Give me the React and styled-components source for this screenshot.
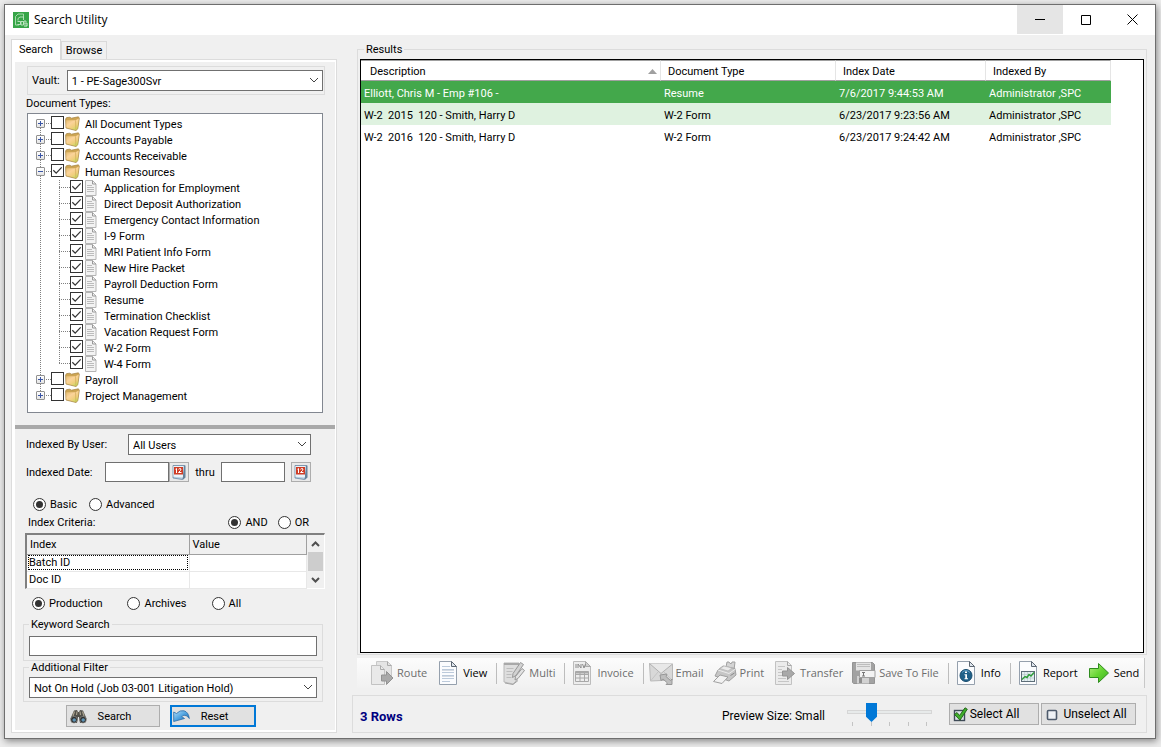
import { useState } from "react";
import styled, { createGlobalStyle, css } from "styled-components";

const ui = `Roboto, "Liberation Sans", Arial, sans-serif`;
const segoe = `"Open Sans", "Noto Sans", sans-serif`;

const GlobalStyle = createGlobalStyle`
  *, *::before, *::after {
    box-sizing: border-box;
  }
  body {
    margin: 0;
    background: #ececec;
    font-family: ${ui};
    font-size: 11px;
    line-height: 15px;
    color: #000;
  }
  button, input, select, table {
    font: inherit;
    color: inherit;
  }
  svg {
    flex: none;
  }
`;

/* window */

const Desktop = styled.div`
  display: flex;
  min-height: 100vh;
  padding: 4px 5px 8px 4px;
`;

const Window = styled.div`
  flex: 1;
  min-width: 0;
  display: flex;
  flex-direction: column;
  border: 1px solid #6e6e6e;
  background: #f0f0f0;
  box-shadow: 1px 2px 7px rgba(0, 0, 0, 0.45);
`;

const TitleBar = styled.header`
  display: flex;
  align-items: flex-start;
  height: 30px;
  padding-left: 8px;
  background: #fff;
`;

const AppTitle = styled.h1`
  flex: 1;
  display: flex;
  align-items: center;
  gap: 5px;
  height: 30px;
  margin: 0;
  font: 12px / 16px ${segoe};
`;

const WindowButton = styled.button`
  display: grid;
  place-items: center;
  width: 46px;
  height: 29px;
  padding: 0;
  border: 0;
  background: ${(props) => (props.$hot ? "#e5e5e5" : "transparent")};
`;

const Content = styled.main`
  flex: 1;
  display: flex;
  gap: 15px;
  padding: 4px 8px 5px 6px;
`;

/* left side */

const Sidebar = styled.section`
  flex: none;
  width: 326px;
  display: flex;
  flex-direction: column;
`;

const Tabs = styled.div`
  display: flex;
  align-items: flex-end;
  height: 20px;
`;

const Tab = styled.button`
  height: ${(props) => (props.$active ? 21 : 18)}px;
  padding: 0 4px;
  border: 1px solid #d9d9d9;
  border-bottom: 0;
  background: #f0f0f0;
  ${(props) =>
    props.$active &&
    css`
      z-index: 1;
      margin-bottom: -1px;
      padding: 0 7px 2px;
      background: #fff;
    `}
`;

const TabPanel = styled.div`
  flex: 1;
  display: flex;
  border: 1px solid #dcdcdc;
  padding: 2px 1px 2px 3px;
  background: #fff;
`;

const Form = styled.form`
  flex: 1;
  display: flex;
  flex-direction: column;
  background: #f0f0f0;
`;

const VaultBox = styled.div`
  display: flex;
  align-items: center;
  gap: 7px;
  margin: 4px 10px 0 12px;
  padding: 3px 1px 3px 4px;
  border: 1px solid #dcdcdc;
`;

const SelectBox = styled.span`
  position: relative;
  display: flex;
  flex: 1;
  & svg {
    position: absolute;
    right: 4px;
    top: 7px;
    pointer-events: none;
  }
`;

const SelectControl = styled.select`
  flex: 1;
  height: 21px;
  padding: 1px 20px 0 4px;
  border: 1px solid #707070;
  border-radius: 0;
  background: #fff;
  appearance: none;
`;

const TreeTitle = styled.div`
  margin: 1px 11px 2px;
`;

const Tree = styled.ul`
  flex: 1;
  margin: 0 12px 12px;
  padding: 2px 0;
  border: 1px solid #828790;
  background: #fff;
  list-style: none;
`;

const TreeRow = styled.li`
  display: flex;
  height: 16px;
`;

const dotsDown = "repeating-linear-gradient(#808080 0 1px, transparent 1px 2px)";
const dotsAcross =
  "repeating-linear-gradient(90deg, #808080 0 1px, transparent 1px 2px)";

const Gutter = styled.span`
  flex: none;
  display: flex;
  align-items: center;
  width: ${(props) => props.$width}px;
  padding: 0 0 1px 8px;
  background-image: ${dotsDown}, ${dotsAcross};
  background-repeat: no-repeat;
  background-position:
    ${(props) => props.$line}px ${(props) => (props.$first ? 8 : 0)}px,
    ${(props) => props.$line}px 7px;
  background-size:
    1px ${(props) => (props.$first || props.$last ? 8 : 16)}px,
    ${(props) => (props.$branch ? 20 : 0)}px 1px;
`;

const Expander = styled.button`
  display: grid;
  place-items: center;
  width: 9px;
  height: 9px;
  padding: 0;
  border: 1px solid #919191;
  border-radius: 1px;
  background: linear-gradient(#fff, #e4e4e4);
`;

const TreeLabel = styled.label`
  display: flex;
  align-items: center;
  height: 16px;
  padding-top: 1px;
  white-space: nowrap;
  & svg {
    margin: 0 ${(props) => (props.$leaf ? "7px 1px 1px" : "5px 3px 1px")};
  }
`;

const Tick = styled.input`
  flex: none;
  width: 13px;
  height: 13px;
  margin: 0 0 4px;
  border: 1px solid #333;
  background: #fff;
  appearance: none;
  &:checked::before {
    content: "";
    display: block;
    width: 11px;
    height: 11px;
    background: #333;
    clip-path: polygon(8% 52%, 16% 44%, 38% 66%, 84% 18%, 92% 26%, 38% 82%);
  }
`;

const Splitter = styled.div`
  height: 4px;
  margin-bottom: 5px;
  background: #a9a9a9;
`;

const FieldRow = styled.div`
  display: flex;
  align-items: center;
  padding: 0 24px 0 11px;
  margin-bottom: 7px;
`;

const FieldLabel = styled.label`
  flex: none;
  width: ${(props) => props.$width}px;
`;

const TextBox = styled.input`
  height: 20px;
  width: ${(props) => (props.$wide ? "100%" : "64px")};
  padding: 0 4px;
  border: 1px solid #707070;
  background: #fff;
`;

const DateButton = styled.button`
  display: grid;
  place-items: center;
  width: 20px;
  height: 20px;
  padding: 0;
  border: 1px solid #adadad;
  background: #e9e9e9;
  margin-left: ${(props) => (props.$apart ? 6 : 0)}px;
`;

const Thru = styled.span`
  width: 32px;
  text-align: center;
`;

const RadioRow = styled.div`
  display: flex;
  align-items: center;
  gap: ${(props) => props.$gap}px;
  padding: ${(props) => props.$pad};
`;

const RadioLabel = styled.label`
  display: flex;
  align-items: center;
  gap: 4px;
  height: 15px;
`;

const Radio = styled.input`
  display: grid;
  place-items: center;
  width: 13px;
  height: 13px;
  margin: 0;
  border: 1px solid #333;
  border-radius: 50%;
  background: #fff;
  appearance: none;
  &:checked::before {
    content: "";
    width: 7px;
    height: 7px;
    border-radius: 50%;
    background: #333;
  }
`;

const Spring = styled.span`
  flex: 1;
`;

const CriteriaBox = styled.div`
  display: flex;
  height: 56px;
  margin: 3px 10px 7px;
  border: 1px solid #fff;
  border-top: 2px solid #808080;
  border-left: 2px solid #808080;
  background: #fff;
`;

const CriteriaTable = styled.table`
  flex: 1;
  height: 52px;
  border-collapse: collapse;
  table-layout: fixed;
  & th,
  & td {
    height: 17px;
    padding: 0 2px;
    border-right: 1px solid #e8e8e8;
    border-bottom: 1px solid #e8e8e8;
    font-weight: normal;
    line-height: 15px;
    text-align: left;
  }
  & th {
    height: 19px;
    padding: 0 3px;
    border-color: #a0a0a0;
    background: #f0f0f0;
  }
`;

const FocusCell = styled.td`
  outline: 1px dotted #000;
  outline-offset: -2px;
`;

const ScrollBar = styled.div`
  display: flex;
  flex-direction: column;
  width: 17px;
  background: #f0f0f0;
`;

const ScrollButton = styled.button`
  display: grid;
  place-items: center;
  height: 17px;
  padding: 0;
  border: 0;
  background: #f0f0f0;
`;

const ScrollThumb = styled.div`
  flex: 1;
  margin: 0 1px;
  background: #cdcdcd;
`;

const Group = styled.fieldset`
  margin: 0 12px 0 8px;
  padding: 5px 5px 4px;
  border: 1px solid #dcdcdc;
  min-width: 0;
  & + & {
    padding: 3px 5px;
  }
`;

const Legend = styled.legend`
  padding: 0 2px;
  line-height: 13px;
`;

const FormButtons = styled.div`
  display: flex;
  gap: 10px;
  padding: 3px 0 3px 51px;
`;

const PushButton = styled.button`
  display: flex;
  align-items: center;
  width: ${(props) => props.$width}px;
  height: 22px;
  padding: 0 3px;
  border: 1px solid #adadad;
  background: #e1e1e1;
  ${(props) =>
    props.$focused &&
    css`
      border: 2px solid #0078d7;
      padding: 0 1px;
    `}
  & span {
    flex: 1;
    padding-right: ${(props) => (props.$wideText ? 2 : 14)}px;
    text-align: center;
    white-space: nowrap;
  }
`;

/* right side */

const Main = styled.section`
  flex: 1;
  min-width: 0;
  display: flex;
  flex-direction: column;
`;

const Results = styled.section`
  flex: 1;
  display: flex;
  flex-direction: column;
  margin: 4px 0 0 5px;
`;

const ResultsFrame = styled.fieldset`
  flex: 1;
  display: flex;
  min-width: 0;
  margin: 0;
  padding: 3px 2px 1px;
  border: 1px solid #dcdcdc;
  & > legend {
    margin-left: 4px;
  }
`;

const ListView = styled.div`
  flex: 1;
  min-width: 0;
  height: 100%;
  border: 1px solid #000;
  background: #fff;
`;

const ResultTable = styled.table`
  width: 750px;
  border-collapse: separate;
  border-spacing: 0;
  table-layout: fixed;
`;

const HeadCell = styled.th`
  height: 21px;
  padding: 1px 3px 0 9px;
  border-top: 1px solid #a0a0a0;
  border-bottom: 1px solid #a0a0a0;
  border-right: 1px solid #e5e5e5;
  font-weight: normal;
  text-align: left;
  &:not(:first-child) {
    padding-left: 7px;
  }
  & span {
    display: flex;
    align-items: center;
    justify-content: space-between;
  }
`;

const Row = styled.tr`
  height: 22px;
  color: ${(props) => (props.$selected ? "#fff" : "#000")};
  background: ${(props) =>
    props.$selected ? "#43a84b" : props.$alt ? "#dff2e0" : "#fff"};
  & td {
    padding: 3px 3px 0;
    white-space: pre;
  }
`;

const Toolbar = styled.div`
  display: flex;
  align-items: center;
  height: 30px;
  margin: 3px 2px 7px 5px;
  padding-left: 9px;
  border-right: 1px solid #c8c8c8;
  background: linear-gradient(#fcfcfc, #f1f1f1);
`;

const Tool = styled.button`
  display: flex;
  align-items: center;
  gap: 3px;
  height: 28px;
  padding: 0 5px 0 4px;
  border: 0;
  background: transparent;
  font: 11px / 16px ${segoe};
  white-space: nowrap;
  color: #000;
  &:disabled {
    color: #6d6d6d;
  }
`;

const ToolDivider = styled.span`
  flex: none;
  width: 1px;
  height: 21px;
  margin: 0 1px 0 4px;
  background: #bdbdbd;
`;

const StatusBar = styled.footer`
  display: flex;
  align-items: center;
  height: 38px;
  padding: 0 10px 0 7px;
  border: 1px solid #dcdcdc;
  font-size: 12px;
`;

const RowCount = styled.strong`
  flex: 1;
  padding-top: 5px;
  font-size: 13px;
  color: #000080;
`;

const PreviewLabel = styled.label`
  padding-top: 4px;
`;

const SliderBox = styled.div`
  display: flex;
  flex-direction: column;
  width: 85px;
  margin: 0 17px 0 22px;
`;

const Slider = styled.input`
  width: 100%;
  height: 19px;
  margin: 0;
  background: transparent;
  appearance: none;
  &::-webkit-slider-runnable-track {
    height: 4px;
    border: 1px solid #d6d6d6;
    background: #e7eaea;
  }
  &::-webkit-slider-thumb {
    width: 11px;
    height: 19px;
    margin-top: -8px;
    background: #0078d7;
    clip-path: polygon(0 0, 100% 0, 100% 73%, 50% 100%, 0 73%);
    appearance: none;
  }
`;

const Ticks = styled.div`
  display: flex;
  justify-content: space-between;
  padding: 0 5px;
  & i {
    width: 1px;
    height: 4px;
    background: #c4c4c4;
  }
`;

const StatusButtons = styled.div`
  display: flex;
  gap: 2px;
`;

/* icons */

const Chevron = () => (
  <svg width="10" height="7" viewBox="0 0 10 7" fill="none" stroke="#444">
    <path d="M1 1l4 4 4-4" />
  </svg>
);

const ScrollArrow = ({ down }) => (
  <svg width="9" height="6" viewBox="0 0 9 6" fill="none" stroke="#505050" strokeWidth="2">
    <path d={down ? "M1 1l3.5 3.5L8 1" : "M1 5l3.5-3.5L8 5"} />
  </svg>
);

const AppIcon = () => (
  <svg width="16" height="16" viewBox="0 0 16 16" fill="none">
    <rect width="16" height="16" fill="#37a548" />
    <path d="M2.500 13V4.500L5 2h5.500v3M2.500 13H6" stroke="#a5dba9" />
    <path d="M5 8.500V6.500L7 5h3.500v3M4.500 9.500h3v3h-3M8 9.500h2.500v3.500H8zM11 9h2v3h-2z" stroke="#d4efd6" strokeWidth=".8" />
    <path d="M11 14h3v-3" stroke="#d4efd6" />
  </svg>
);

const Folder = () => (
  <svg width="15" height="15" viewBox="0 0 15 15">
    <defs>
      <linearGradient id="folder" x1="0" y1="0" x2="0.7" y2="1">
        <stop offset="0" stopColor="#dfb765" />
        <stop offset="0.45" stopColor="#fbd39a" />
        <stop offset="0.75" stopColor="#f0cf7c" />
        <stop offset="1" stopColor="#c6dc62" />
      </linearGradient>
    </defs>
    <path d="M.6 3l1-1.400L5 1.200l1.200 1L13.400 .8l.9 1.400-1.500 10.600-1.800 1.700L1 12z" fill="#cda553" stroke="#a38140" strokeWidth=".7" />
    <path d="M1.200 4.200l9.300.1 3.300-1.900-1.400 10.300-1.600 1.300L1.300 11.600z" fill="url(#folder)" />
    <path d="M10.500 4.300l.4 9.500" stroke="#c9a253" strokeWidth=".6" />
  </svg>
);

const Sheet = () => (
  <svg width="13" height="16" viewBox="0 0 13 16" fill="none">
    <path d="M1.500 .5h7l3.500 3.500v11.500H1.500z" fill="#f3f3f3" stroke="#b4b4b4" />
    <path d="M8.500 .5V4H12" stroke="#999" />
    <path d="M3 5.500h5M3 7.500h7M3 9.500h7M3 11.500h7" stroke="#bcbcbc" />
  </svg>
);

const Calendar = () => (
  <svg width="14" height="16" viewBox="0 0 14 16">
    <path d="M1 1.500h11.500v12l-2 2L1 14z" fill="#b4cde0" stroke="#6c87a0" strokeWidth=".8" />
    <path d="M10.500 14.500l1.500-13h1.500v12l-2.500 2.200z" fill="#66829b" />
    <path d="M1.500 2h10l-.6 11.500-9.400-.8z" fill="#eaf3f9" />
    <rect x="2" y="3" width="9" height="7.500" fill="#cf3d26" />
    <path d="M4.500 4.500v4.500M3.500 5.200l1-.7M6.500 5.300q1.500-1.500 2.500-.3.300 1.200-2.500 3.500h3" fill="none" stroke="#fff" />
  </svg>
);

const Binoculars = () => (
  <svg width="17" height="15" viewBox="0 0 17 15">
    <path d="M4 1.500l3-.5 1 2h1l1-2 3 .5 3.500 8L14 14H10l-1-6H8l-1 6H3L.5 9.500z" fill="#514f49" />
    <path d="M4.500 2.500L3 7M7 2.500L6.500 6M12.500 2.500L14 7M10 2.500l.5 3.500" stroke="#a8a08c" strokeWidth="1.200" />
    <circle cx="4" cy="10.700" r="3.300" fill="#2d2d2d" stroke="#8c8c88" strokeWidth=".7" />
    <circle cx="13" cy="10.700" r="3.300" fill="#2d2d2d" stroke="#8c8c88" strokeWidth=".7" />
    <circle cx="4.200" cy="11" r="1.800" fill="#5e93b4" />
    <circle cx="13.200" cy="11" r="1.800" fill="#5e93b4" />
  </svg>
);

const ResetIcon = () => (
  <svg width="17" height="14" viewBox="0 0 17 14">
    <defs>
      <linearGradient id="reset" x1="0" y1="0" x2="1" y2="1">
        <stop offset="0" stopColor="#b9e1fa" />
        <stop offset="0.5" stopColor="#4fa3e0" />
        <stop offset="1" stopColor="#1d64a8" />
      </linearGradient>
    </defs>
    <path d="M.7 3l2.800 1.500Q7 .8 11 1.800q4.500 1.200 5.300 7.700-2.300-3.500-5.300-3.300-1.500.3-2.200 1.500L11.500 9.500.7 12.500z" fill="url(#reset)" stroke="#2a6ca8" strokeWidth=".8" />
  </svg>
);

const ToolSvg = ({ children }) => (
  <svg width="24" height="24" viewBox="0 0 24 24" fill="none">
    {children}
  </svg>
);

const Paper = ({ faded }) => (
  <>
    <path d="M3.500 .5h12l5 5v18h-17z" fill={faded ? "#ededed" : "#fbfcfe"} stroke={faded ? "#bcbcbc" : "#95a0ad"} />
    <path d="M15.500 .5v5h5z" fill={faded ? "#d0d0d0" : "#dfe6ee"} stroke={faded ? "#aaa" : "#5d6772"} />
  </>
);

const RouteIcon = () => (
  <ToolSvg>
    <path d="M6.500 .5h11l4 4v14h-15z" fill="#e4e4e4" stroke="#c8c8c8" />
    <path d="M1.500 4.500h9l4 4v15h-13z" fill="#e9e9e9" stroke="#c2c2c2" />
    <path d="M10.500 4.500v4h4M17.500 .5v4h4" stroke="#aaa" />
    <path d="M11.500 14h5v-3.500l6.500 6.500-6.500 6.500V20h-5z" fill="#a9a9a9" stroke="#929292" />
  </ToolSvg>
);

const ViewIcon = () => (
  <ToolSvg>
    <Paper />
    <path d="M6 5.500h8M6 8.500h12M6 11.500h12M6 14.500h12M6 17.500h12M6 20.500h8" stroke="#bccadb" />
    <path d="M6 9.500h12M6 15.500h12" stroke="#d5dbe3" />
  </ToolSvg>
);

const MultiIcon = () => (
  <ToolSvg>
    <path d="M2 2h15l-2 17-4 4-9-2z" fill="#dedede" stroke="#b8b8b8" />
    <path d="M2 2h15v2H2z" fill="#a9a9a9" />
    <path d="M4.500 7.500h7M4.500 10.500h6M4.500 13.500h5M4.500 16.500h5" stroke="#bdbdbd" />
    <path d="M18.500 1.500l3 2-7.500 11-3.500 2 .5-4z" fill="#d2d2d2" stroke="#989898" />
    <path d="M20 7.500l2.500 2-6.500 8-3 1.500.5-3.500z" fill="#e2e2e2" stroke="#989898" />
    <path d="M3 22l8 1.500 5-4" stroke="#a2a2a2" />
  </ToolSvg>
);

const InvoiceIcon = () => (
  <ToolSvg>
    <Paper faded />
    <path d="M6 3v4M8 7V3l3 4V3M12.500 3l1.500 4 1.500-4" stroke="#8c8c8c" />
    <path d="M5.500 10.500h13v10h-13zM5.500 13.500h13M5.500 17h13M10 10.500v10M14.500 10.500v10" stroke="#a8a8a8" />
    <path d="M5.500 10.500h13v2h-13z" fill="#a9a9a9" />
  </ToolSvg>
);

const EmailIcon = () => (
  <ToolSvg>
    <path d="M.5 2.500l23 .5v16l-22 1z" fill="#d8d8d8" stroke="#b8b8b8" />
    <path d="M.5 2.500L12 12.500 23.500 3" fill="#e8e8e8" stroke="#b0b0b0" />
    <path d="M1.500 20L9 11M23 19l-8-8" stroke="#c4c4c4" />
    <path d="M11 14l7-1-1 2.500 4.500 4L23 18v5.500h-6l1.500-1.500-4.500-4-2 1.500z" fill="#bebebe" stroke="#979797" />
  </ToolSvg>
);

const PrintIcon = () => (
  <ToolSvg>
    <path d="M13 6l1-5h2l1 1.500h1.500L19 1h3l-1 8z" fill="#d4d4d4" stroke="#a0a0a0" />
    <path d="M5 9l5-4 12 2.500 1 6.500-7 6L2 15z" fill="#c6c6c6" stroke="#a0a0a0" />
    <path d="M5 9l11 3.500 6.500-4.500" stroke="#ececec" />
    <path d="M7 7.500l4-2.500 8 2-4 3z" fill="#eaeaea" stroke="#b0b0b0" strokeWidth=".6" />
    <path d="M7 14l8 2-6 6.500-8.500-2z" fill="#f2f2f2" stroke="#a0a0a0" />
    <path d="M17.500 14.500l4-2.500" stroke="#888" />
  </ToolSvg>
);

const TransferIcon = () => (
  <ToolSvg>
    <path d="M2.500 .5h12l4 4v19h-16z" fill="#ebebeb" stroke="#c2c2c2" />
    <path d="M14.500 .5v4h4" stroke="#a8a8a8" />
    <path d="M5 5.500h7M5 8.500h4M5 11.500h4M5 14.500h4M5 17.500h8M5 20.500h11" stroke="#c6c6c6" />
    <path d="M9.500 10h5V6.500l7 6-7 6V15h-5z" fill="#a9a9a9" stroke="#949494" />
  </ToolSvg>
);

const SaveIcon = () => (
  <ToolSvg>
    <path d="M.5 1.500h20l2 2v19H1.500l-1-1z" fill="#a2a2a2" stroke="#949494" />
    <path d="M4 1.500h15v8H4z" fill="#e4e4e4" />
    <path d="M5 3.500h13M5 5.500h13" stroke="#bdbdbd" />
    <path d="M5 15h12v7.500H5z" fill="#d2d2d2" />
    <path d="M7 17h3v5H7z" fill="#8f8f8f" />
    <path d="M7.500 9.500H23v7H7.500z" fill="#f3f3f3" stroke="#a0a0a0" />
    <path d="M10 11.500h3M10 15h3M11.500 11.500V15" stroke="#777" />
  </ToolSvg>
);

const InfoIcon = () => (
  <ToolSvg>
    <Paper />
    <circle cx="12" cy="14.500" r="6" fill="#1f6088" stroke="#174b6d" />
    <path d="M8 11.500q4-4 8 0" stroke="#5c9cc4" />
    <path d="M11 10.500h2v1.500h-2zM10.500 13.300H13v4h1v1h-3.500v-1h.8v-3h-.8z" fill="#fff" />
  </ToolSvg>
);

const ReportIcon = () => (
  <ToolSvg>
    <Paper />
    <rect x="5.500" y="10.500" width="13" height="10" fill="#e3eef0" stroke="#5d6d78" />
    <path d="M8.500 11v9M11.500 11v9M14.500 11v9M6 13.500h12M6 17h12" stroke="#b4c5ca" strokeWidth=".6" />
    <path d="M6 18.500l3-3 2 1 2-3 2 1.500 3-3.500" stroke="#2f9c3a" strokeWidth="1.400" />
  </ToolSvg>
);

const SendIcon = () => (
  <ToolSvg>
    <defs>
      <linearGradient id="send" x1="0" y1="0" x2="1" y2="1">
        <stop offset="0" stopColor="#b6ee84" />
        <stop offset="0.5" stopColor="#66d633" />
        <stop offset="1" stopColor="#3bb01f" />
      </linearGradient>
    </defs>
    <path d="M2.500 7.500h9V2.500L21.500 12l-10 9.500V16.500h-9z" fill="url(#send)" stroke="#2f8c1e" strokeLinejoin="round" />
  </ToolSvg>
);

const CheckedIcon = () => (
  <svg width="15" height="15" viewBox="0 0 15 15" fill="none">
    <rect x="1.500" y="3.500" width="10" height="10" fill="#dfe5ec" stroke="#3f4a58" strokeWidth="1.400" />
    <path d="M1.500 7.500l2.500-2 2.500 3L12 .8l2.300 1.400L7 13.200z" fill="#3fae2c" stroke="#1f5d15" strokeWidth=".9" />
  </svg>
);

const UncheckedIcon = () => (
  <svg width="15" height="15" viewBox="0 0 15 15" fill="none">
    <rect x="2.500" y="3.500" width="9" height="9" rx="1" fill="#eef1f5" stroke="#4d5a6b" strokeWidth="1.600" />
  </svg>
);

/* data */

const forms = [
  "Application for Employment",
  "Direct Deposit Authorization",
  "Emergency Contact Information",
  "I-9 Form",
  "MRI Patient Info Form",
  "New Hire Packet",
  "Payroll Deduction Form",
  "Resume",
  "Termination Checklist",
  "Vacation Request Form",
  "W-2 Form",
  "W-4 Form",
];

const folders = [
  { name: "All Document Types" },
  { name: "Accounts Payable" },
  { name: "Accounts Receivable" },
  { name: "Human Resources", children: forms },
  { name: "Payroll" },
  { name: "Project Management" },
];

const columns = [
  { name: "Description", width: 300, sorted: true },
  { name: "Document Type", width: 175 },
  { name: "Index Date", width: 150 },
  { name: "Indexed By", width: 125 },
];

const documents = [
  ["Elliott, Chris M - Emp #106 -", "Resume", "7/6/2017 9:44:53 AM", "Administrator ,SPC"],
  ["W-2  2015  120 - Smith, Harry D", "W-2 Form", "6/23/2017 9:23:56 AM", "Administrator ,SPC"],
  ["W-2  2016  120 - Smith, Harry D", "W-2 Form", "6/23/2017 9:24:42 AM", "Administrator ,SPC"],
];

const tools = [
  { name: "Route", icon: RouteIcon, disabled: true },
  { name: "View", icon: ViewIcon, divider: true },
  { name: "Multi", icon: MultiIcon, disabled: true, divider: true },
  { name: "Invoice", icon: InvoiceIcon, disabled: true, divider: true },
  { name: "Email", icon: EmailIcon, disabled: true },
  { name: "Print", icon: PrintIcon, disabled: true },
  { name: "Transfer", icon: TransferIcon, disabled: true },
  { name: "Save To File", icon: SaveIcon, disabled: true, divider: true },
  { name: "Info", icon: InfoIcon, divider: true },
  { name: "Report", icon: ReportIcon },
  { name: "Send", icon: SendIcon },
];

/* parts */

const Select = ({ id, label, children }) => (
  <SelectBox>
    <SelectControl id={id} aria-label={label}>
      {children}
    </SelectControl>
    <Chevron />
  </SelectBox>
);

const RadioOption = ({ name, label, checked }) => (
  <RadioLabel>
    <Radio type="radio" name={name} defaultChecked={checked} />
    {label}
  </RadioLabel>
);

const FolderNode = ({ folder, first, last }) => {
  const [open, setOpen] = useState(Boolean(folder.children));
  const leaves = (open && folder.children) || [];
  return (
    <>
      <TreeRow>
        <Gutter $width={23} $line={12} $branch $first={first} $last={last}>
          <Expander
            type="button"
            aria-label={`Toggle ${folder.name}`}
            onClick={() => setOpen(!open)}
          >
            <svg width="5" height="5" viewBox="0 0 5 5" stroke="#3a55a5">
              <path d={open ? "M0 2.500h5" : "M0 2.500h5M2.500 0v5"} />
            </svg>
          </Expander>
        </Gutter>
        <TreeLabel>
          <Tick type="checkbox" defaultChecked={Boolean(folder.children)} />
          <Folder />
          {folder.name}
        </TreeLabel>
      </TreeRow>
      {leaves.map((leaf, i) => (
        <TreeRow key={leaf}>
          <Gutter $width={23} $line={12} />
          <Gutter $width={19} $line={8} $branch $last={i === leaves.length - 1} />
          <TreeLabel $leaf>
            <Tick type="checkbox" defaultChecked />
            <Sheet />
            {leaf}
          </TreeLabel>
        </TreeRow>
      ))}
    </>
  );
};

const SearchForm = () => (
  <Form onSubmit={(e) => e.preventDefault()}>
    <VaultBox>
      <label htmlFor="vault">Vault:</label>
      <Select id="vault">
        <option>1 - PE-Sage300Svr</option>
      </Select>
    </VaultBox>
    <TreeTitle>Document Types:</TreeTitle>
    <Tree>
      {folders.map((folder, i) => (
        <FolderNode
          key={folder.name}
          folder={folder}
          first={i === 0}
          last={i === folders.length - 1}
        />
      ))}
    </Tree>
    <Splitter />
    <FieldRow>
      <FieldLabel htmlFor="user" $width={102}>
        Indexed By User:
      </FieldLabel>
      <Select id="user">
        <option>All Users</option>
      </Select>
    </FieldRow>
    <FieldRow>
      <FieldLabel htmlFor="from" $width={79}>
        Indexed Date:
      </FieldLabel>
      <TextBox id="from" type="text" />
      <DateButton type="button" aria-label="Pick start date">
        <Calendar />
      </DateButton>
      <Thru>thru</Thru>
      <TextBox type="text" aria-label="Indexed date to" />
      <DateButton type="button" aria-label="Pick end date" $apart>
        <Calendar />
      </DateButton>
    </FieldRow>
    <RadioRow $gap={12} $pad="8px 0 3px 18px">
      <RadioOption name="mode" label="Basic" checked />
      <RadioOption name="mode" label="Advanced" />
    </RadioRow>
    <RadioRow $gap={10} $pad="0 26px 0 13px">
      Index Criteria:
      <Spring />
      <RadioOption name="join" label="AND" checked />
      <RadioOption name="join" label="OR" />
    </RadioRow>
    <CriteriaBox>
      <CriteriaTable>
        <colgroup>
          <col width="162" />
          <col />
        </colgroup>
        <thead>
          <tr>
            <th>Index</th>
            <th>Value</th>
          </tr>
        </thead>
        <tbody>
          <tr>
            <FocusCell>Batch ID</FocusCell>
            <td />
          </tr>
          <tr>
            <td>Doc ID</td>
            <td />
          </tr>
        </tbody>
      </CriteriaTable>
      <ScrollBar>
        <ScrollButton type="button" aria-label="Scroll up">
          <ScrollArrow />
        </ScrollButton>
        <ScrollThumb />
        <ScrollButton type="button" aria-label="Scroll down">
          <ScrollArrow down />
        </ScrollButton>
      </ScrollBar>
    </CriteriaBox>
    <RadioRow $gap={25} $pad="0 0 7px 17px">
      <RadioOption name="source" label="Production" checked />
      <RadioOption name="source" label="Archives" />
      <RadioOption name="source" label="All" />
    </RadioRow>
    <Group>
      <Legend>Keyword Search</Legend>
      <TextBox type="text" aria-label="Keyword Search" $wide />
    </Group>
    <Group>
      <Legend>Additional Filter</Legend>
      <Select label="Additional Filter">
        <option>Not On Hold (Job 03-001 Litigation Hold)</option>
      </Select>
    </Group>
    <FormButtons>
      <PushButton type="submit" $width={94}>
        <Binoculars />
        <span>Search</span>
      </PushButton>
      <PushButton type="reset" $width={86} $focused>
        <ResetIcon />
        <span>Reset</span>
      </PushButton>
    </FormButtons>
  </Form>
);

const ResultList = () => (
  <ResultTable>
    <colgroup>
      {columns.map((column) => (
        <col key={column.name} width={column.width} />
      ))}
    </colgroup>
    <thead>
      <tr>
        {columns.map((column) => (
          <HeadCell key={column.name}>
            <span>
              {column.name}
              {column.sorted && (
                <svg width="9" height="5" viewBox="0 0 9 5" fill="#a0a0a0">
                  <path d="M0 5l4.500-5L9 5z" />
                </svg>
              )}
            </span>
          </HeadCell>
        ))}
      </tr>
    </thead>
    <tbody>
      {documents.map((cells, i) => (
        <Row key={cells[2]} $selected={i === 0} $alt={i % 2 === 1}>
          {cells.map((cell) => (
            <td key={cell}>{cell}</td>
          ))}
        </Row>
      ))}
    </tbody>
  </ResultTable>
);

const App = () => (
  <>
    <GlobalStyle />
    <Desktop>
      <Window>
        <TitleBar>
          <AppTitle>
            <AppIcon />
            Search Utility
          </AppTitle>
          <WindowButton type="button" aria-label="Minimize" $hot>
            <svg width="10" height="10" stroke="#000">
              <path d="M0 4.500h10" />
            </svg>
          </WindowButton>
          <WindowButton type="button" aria-label="Maximize">
            <svg width="10" height="10" stroke="#000" fill="none">
              <path d="M.5 .5h9v9h-9z" />
            </svg>
          </WindowButton>
          <WindowButton type="button" aria-label="Close">
            <svg width="11" height="11" stroke="#000">
              <path d="M.5 .5l10 10M10.500 .5l-10 10" />
            </svg>
          </WindowButton>
        </TitleBar>
        <Content>
          <Sidebar>
            <Tabs role="tablist">
              <Tab type="button" role="tab" aria-selected="true" $active>
                Search
              </Tab>
              <Tab type="button" role="tab" aria-selected="false">
                Browse
              </Tab>
            </Tabs>
            <TabPanel>
              <SearchForm />
            </TabPanel>
          </Sidebar>
          <Main>
            <Results>
              <ResultsFrame>
                <Legend>Results</Legend>
                <ListView>
                  <ResultList />
                </ListView>
              </ResultsFrame>
            </Results>
            <Toolbar role="toolbar">
              {tools.map(({ name, icon: Icon, disabled, divider }) => [
                <Tool key={name} type="button" disabled={disabled}>
                  <Icon />
                  {name}
                </Tool>,
                divider && <ToolDivider key={`${name}-divider`} />,
              ])}
            </Toolbar>
            <StatusBar>
              <RowCount>3 Rows</RowCount>
              <PreviewLabel htmlFor="preview">Preview Size: Small</PreviewLabel>
              <SliderBox>
                <Slider id="preview" type="range" min="0" max="4" defaultValue="1" />
                <Ticks>
                  <i />
                  <i />
                  <i />
                  <i />
                  <i />
                </Ticks>
              </SliderBox>
              <StatusButtons>
                <PushButton type="button" $width={90}>
                  <CheckedIcon />
                  <span>Select All</span>
                </PushButton>
                <PushButton type="button" $width={95} $wideText>
                  <UncheckedIcon />
                  <span>Unselect All</span>
                </PushButton>
              </StatusButtons>
            </StatusBar>
          </Main>
        </Content>
      </Window>
    </Desktop>
  </>
);

export default App;
